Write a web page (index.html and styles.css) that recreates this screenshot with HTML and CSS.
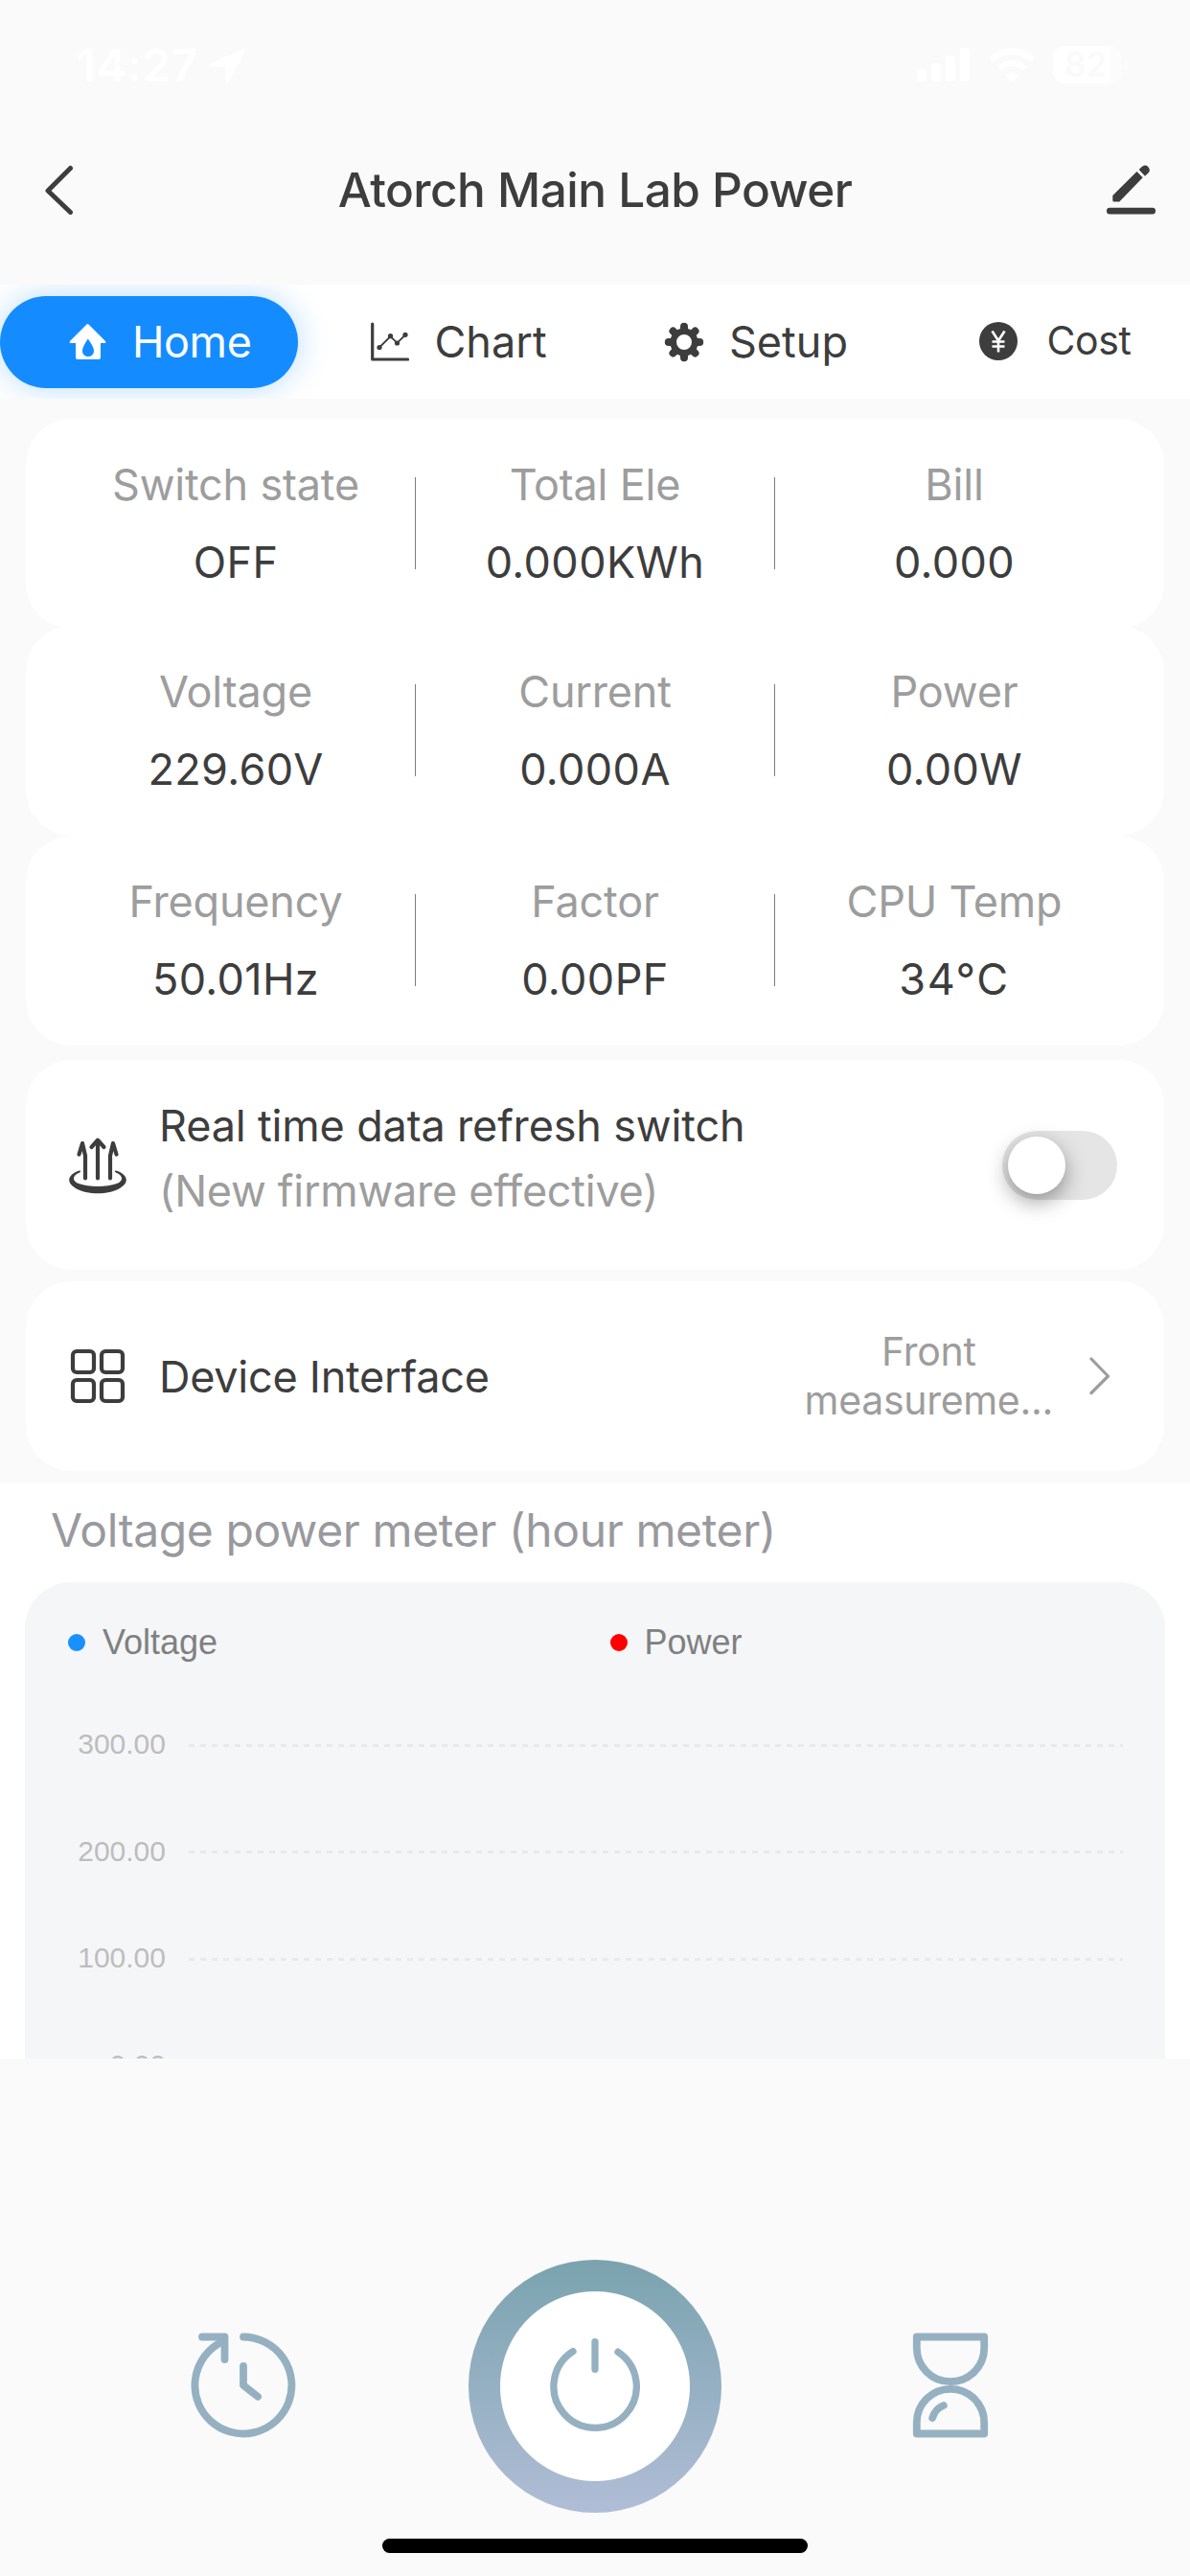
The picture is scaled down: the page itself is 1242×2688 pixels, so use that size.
FILE: index.html
```html
<!DOCTYPE html>
<html lang="en">
<head>
<meta charset="utf-8">
<title>Atorch Main Lab Power</title>
<link rel="stylesheet" href="styles.css">
</head>
<body>
<div class="screen">
  <div class="status">
    <span class="time">14:27</span>
    <svg class="location" width="40" height="38" viewBox="0 0 40 38"><path fill="currentColor" d="M36.500 1.300 2.500 16.500Q-.5 18.500 3 19.500H17Q18.500 19.500 18.500 21V34.500Q19.500 38 22 35L38.500 3.500Q39 .5 36.500 1.300Z"/></svg>
    <svg class="signal" width="56" height="36" viewBox="0 0 56 36" fill="currentColor"><rect x="0" y="22" width="10" height="13" rx="3"/><rect x="15" y="16" width="10" height="19" rx="3"/><rect x="30" y="8" width="10" height="27" rx="3"/><rect x="45" y="0" width="10" height="35" rx="3"/></svg>
    <svg class="wifi" width="48" height="36" viewBox="0 0 48 36"><g fill="none" stroke="currentColor" stroke-width="6.500"><path d="M2.500 12.500Q24-6 45.500 12.500"/><path d="M10.500 21.500Q24 10 37.500 21.500"/></g><path fill="currentColor" d="M17 28.500Q24 23 31 28.500L24 35.500Z"/></svg>
    <span class="battery"><span class="level">82</span></span>
    <span class="nub"></span>
  </div>

  <header class="header">
    <svg class="back" width="32" height="52" viewBox="0 0 32 52"><path d="M28.500 3.500 5 27 28.500 49.500" fill="none" stroke="currentColor" stroke-width="5" stroke-linecap="round" stroke-linejoin="round"/></svg>
    <h1>Atorch Main Lab Power</h1>
    <svg class="edit" width="52" height="52" viewBox="1155 172.500 52 52" fill="currentColor"><path d="M1161.300 204.500 1186.500 179.500 1192.700 185.700 1168.300 211H1163Q1161.300 211 1161.300 209.500ZM1188.700 177.500 1191.700 174.500Q1195 171.500 1198 174.300 1201.500 178 1198.500 181L1195 184.300Z"/><rect x="1155" y="217.300" width="51" height="6.700" rx="3.300"/></svg>
  </header>

  <nav class="tabs">
    <div class="tab active">
      <svg width="40" height="42" viewBox="0 0 40 42"><path fill="currentColor" fill-rule="evenodd" d="M19 2Q20 2 21 3L38 20Q39 22 37 22H33V37Q33 39 31 39H9Q7 39 7 37V22H2Q0 22 1 20L18 3Q19 2 19 2ZM19.800 17.500Q14 26 14 30C14 38 26 38 26 30Q26 26 19.800 17.500Z"/></svg>
      <span>Home</span>
    </div>
    <div class="tab chart-tab">
      <svg width="40" height="42" viewBox="0 0 40 42"><path d="M1.700 2V39H38.500" fill="none" stroke="currentColor" stroke-width="3.200" stroke-linecap="round" stroke-linejoin="round"/><path d="M9 26.500 20.500 15 27.500 21.800 36 13.500" fill="none" stroke="currentColor" stroke-width="1.800"/><g fill="currentColor"><circle cx="9" cy="26.500" r="2.600"/><circle cx="20.500" cy="14.700" r="2.600"/><circle cx="27.500" cy="22" r="2.600"/><circle cx="36" cy="13.300" r="2.600"/></g></svg>
      <span>Chart</span>
    </div>
    <div class="tab setup-tab">
      <svg width="42" height="42" viewBox="-21 -21 42 42"><g fill="none" stroke="currentColor" stroke-width="8" stroke-linecap="round"><path d="M0-16.200V-12M0 16.200V12M-16.200 0H-12M16.200 0H12"/><path d="M-11.500-11.500-9-9M11.500-11.500 9-9M-11.500 11.500-9 9M11.500 11.500 9 9"/></g><circle r="11.300" fill="none" stroke="currentColor" stroke-width="6.600"/></svg>
      <span>Setup</span>
    </div>
    <div class="tab cost-tab">
      <svg width="40" height="42" viewBox="0 0 40 42"><circle cx="20" cy="21" r="20" fill="currentColor"/><path d="M13.500 10.500 20 20.500 26.500 10.500M20 20.500V32.500M13.500 21.500H26.500M13.500 26.500H26.500" fill="none" stroke="#fff" stroke-width="2.600"/></svg>
      <span>Cost</span>
    </div>
  </nav>

  <main class="content">
    <section class="card stats">
      <div class="stat"><span class="label">Switch state</span><span class="value">OFF</span></div>
      <i class="divider"></i>
      <div class="stat"><span class="label">Total Ele</span><span class="value">0.000KWh</span></div>
      <i class="divider"></i>
      <div class="stat"><span class="label">Bill</span><span class="value">0.000</span></div>
    </section>
    <section class="card stats overlap">
      <div class="stat"><span class="label">Voltage</span><span class="value">229.60V</span></div>
      <i class="divider"></i>
      <div class="stat"><span class="label">Current</span><span class="value">0.000A</span></div>
      <i class="divider"></i>
      <div class="stat"><span class="label">Power</span><span class="value">0.00W</span></div>
    </section>
    <section class="card stats">
      <div class="stat"><span class="label">Frequency</span><span class="value">50.01Hz</span></div>
      <i class="divider"></i>
      <div class="stat"><span class="label">Factor</span><span class="value">0.00PF</span></div>
      <i class="divider"></i>
      <div class="stat"><span class="label">CPU Temp</span><span class="value temp">34°C</span></div>
    </section>

    <section class="card row refresh">
      <svg class="row-icon" width="60" height="60" viewBox="0 0 60 60" fill="none" stroke="currentColor" stroke-linecap="round" stroke-linejoin="round"><g stroke-width="4.200"><path d="M30 4V43.500M23.500 11 30 3.700 36.500 11"/><path d="M17 43.500V20L14 7 10.500 18.500"/><path d="M43 43.500V20L46 7 49.500 18.500"/></g><path fill="currentColor" stroke="none" d="M11 35.500C-1 39-4 48 7 54 19 61 41 61 53 54 64 48 61 39 49 35.500 47.500 35.300 47.500 36.800 48.500 37.300 57 41 57 46 50 49 39 53 21 53 10 49 3 46 3 41 11.500 37.300 12.500 36.500 12 35.300 11 35.500Z"/></svg>
      <div class="row-text">
        <span class="title">Real time data refresh switch</span>
        <span class="hint">(New firmware effective)</span>
      </div>
      <span class="toggle"><span class="knob"></span></span>
    </section>

    <section class="card row device">
      <svg class="row-icon" width="60" height="60" viewBox="0 0 60 60" fill="none" stroke="currentColor" stroke-width="4.200"><rect x="4" y="4" width="22" height="22" rx="4"/><rect x="34" y="4" width="22" height="22" rx="4"/><rect x="4" y="34" width="22" height="22" rx="4"/><rect x="34" y="34" width="22" height="22" rx="4"/></svg>
      <span class="title">Device Interface</span>
      <span class="choice">Front<br>measureme...</span>
      <svg class="chevron" width="22" height="42" viewBox="0 0 22 42"><path d="M2 3 19.500 21 2 38.500" fill="none" stroke="currentColor" stroke-width="3.200" stroke-linecap="round" stroke-linejoin="round"/></svg>
    </section>
  </main>

  <section class="meter">
    <h2>Voltage power meter (hour meter)</h2>
    <div class="panel">
      <div class="legend">
        <span class="key"><i class="dot blue"></i>Voltage</span>
        <span class="key"><i class="dot red"></i>Power</span>
      </div>
      <div class="axis"><span>300.00</span><i class="grid-line"></i></div>
      <div class="axis"><span>200.00</span><i class="grid-line"></i></div>
      <div class="axis"><span>100.00</span><i class="grid-line"></i></div>
      <div class="axis"><span>0.00</span><i class="grid-line"></i></div>
    </div>
  </section>

  <footer class="controls">
    <svg class="history" width="110" height="110" viewBox="198.500 2433.500 110 110" fill="none" stroke="currentColor" stroke-width="7.800" stroke-linecap="round" stroke-linejoin="round"><path d="M253.500 2438A50.500 50.500 0 1 1 230.500 2443.500"/><path d="M210.500 2438H234V2461.500"/><path d="M253.500 2468.500V2488.500L268.500 2500.300"/></svg>
    <div class="power">
      <svg width="94" height="98" viewBox="574 2439 94 98" fill="none" stroke="currentColor" stroke-width="7.300" stroke-linecap="round"><path d="M598 2453.700A43.200 43.200 0 1 0 645 2454.200"/><path d="M621 2443.600V2472.300"/></svg>
    </div>
    <svg class="hourglass" width="80" height="110" viewBox="951.500 2433.500 80 110" fill="none" stroke="currentColor" stroke-width="7.800" stroke-linecap="round" stroke-linejoin="round"><path d="M956.300 2438H1026.700V2449.500A35.200 35.200 0 0 1 956.300 2449.500Z"/><path d="M956.300 2539H1026.700V2527.500A35.200 35.200 0 0 0 956.300 2527.500Z"/><path d="M972.700 2522.500Q975.500 2513 984.300 2509.500"/></svg>
  </footer>
  <div class="home-indicator"></div>
</div>
</body>
</html>
```
FILE: styles.css
```css
* { box-sizing: border-box; }

body {
  margin: 0;
  background: #fafafa;
  color: #3d3d3d;
  font-family: Inter, "Liberation Sans", sans-serif;
  font-size: 45px;
}

svg { display: block; flex: none; }

.screen {
  width: 1242px;
  height: 2688px;
  display: flex;
  flex-direction: column;
  overflow: hidden;
}

/* Status bar */
.status {
  height: 132px;
  flex: none;
  display: flex;
  align-items: flex-start;
  padding: 48px 64px 0 80px;
  color: #fff;
}
.time {
  width: 137px;
  font-size: 47px;
  font-weight: 600;
  line-height: 40px;
  letter-spacing: .8px;
}
.location { margin-top: 2px; }
.signal { margin: 2px 19px 0 auto; }
.wifi { margin: 2px 19px 0 0; }
.battery {
  width: 72px;
  height: 39px;
  border-radius: 12px;
  background: #fcfcfc;
}
.level {
  display: block;
  width: 59px;
  height: 39px;
  padding-left: 12px;
  border-radius: 12px 0 0 12px;
  background: #fff;
  color: #fafafa;
  font-size: 35px;
  font-weight: 600;
  line-height: 39px;
}
.nub {
  width: 5px;
  height: 13px;
  margin: 13px 0 0 2px;
  border-radius: 0 5px 5px 0;
  background: #fcfcfc;
}

/* Title bar */
.header {
  height: 165px;
  flex: none;
  display: grid;
  grid-template-columns: 52px 1fr 52px;
  align-items: center;
  padding: 0 35px 33px 45px;
}
h1 {
  margin: 0 10px 0 0;
  font-size: 49.500px;
  font-weight: 500;
  letter-spacing: -.52px;
  text-align: center;
}

/* Tabs */
.tabs {
  height: 119px;
  flex: none;
  display: grid;
  grid-template-columns: repeat(4, 1fr);
  align-items: center;
  overflow: hidden;
  background: #fff;
}
.tab {
  height: 96px;
  display: flex;
  align-items: center;
  gap: 26px;
  padding-left: 72px;
  border-radius: 48px;
  line-height: 96px;
}
.tab.active {
  background: #148cff;
  color: #fff;
  letter-spacing: -.4px;
  box-shadow: 0 0 32px rgba(20, 140, 255, .3);
}
.chart-tab { padding-left: 76px; gap: 27px; }
.cost-tab {
  padding-left: 90px;
  gap: 31px;
  font-size: 41px;
  letter-spacing: -.39px;
  line-height: 92px;
  align-items: flex-start;
}
.cost-tab svg { margin-top: 26px; }

/* Cards */
.content {
  flex: none;
  padding: 21px 27px 12px;
}
.card {
  border-radius: 48px;
  background: #fff;
}
.stats {
  height: 219px;
  display: flex;
  align-items: center;
  padding: 0 32px;
}
.stats.overlap { margin-top: -3px; }
.stat {
  flex: 1 1 0;
  display: flex;
  flex-direction: column;
  align-items: center;
  gap: 21px;
  line-height: 60px;
}
.divider {
  width: 1px;
  height: 96px;
  margin-bottom: 1px;
  background: #7d7d7d;
}
.label, .hint, .choice { color: #9d9d9d; }
.label { letter-spacing: -.2px; }
.value { letter-spacing: .4px; }
.value.temp { letter-spacing: 1.6px; }

.row {
  display: flex;
  align-items: center;
  padding: 0 49px 0 45px;
}
.row-icon { margin-right: 34px; }
.refresh { height: 219px; margin-top: 15px; }
.row-text {
  display: flex;
  flex-direction: column;
  align-self: flex-start;
  padding-top: 35px;
  line-height: 68px;
}
.refresh .title { letter-spacing: -.16px; }
.refresh .hint { letter-spacing: -.27px; }
.toggle {
  width: 120px;
  height: 72px;
  margin-left: auto;
  padding: 6px;
  border-radius: 36px;
  background: #e5e5e5;
}
.knob {
  display: block;
  width: 60px;
  height: 60px;
  border-radius: 50%;
  background: #fff;
  box-shadow: 0 8px 22px rgba(0, 0, 0, .38);
}
.device { height: 198px; margin-top: 12px; padding-right: 56px; }
.device .title { letter-spacing: -.25px; }
.choice {
  margin-left: auto;
  font-size: 41px;
  line-height: 51px;
  letter-spacing: -.3px;
  text-align: center;
}
.chevron { margin-left: 38px; color: #9d9d9d; }

/* Hourly meter */
.meter {
  height: 601px;
  flex: none;
  overflow: hidden;
  padding: 0 26px;
  background: #fff;
}
h2 {
  margin: 0;
  padding: 0 27px 5px;
  color: #99999e;
  font-size: 48px;
  font-weight: 400;
  line-height: 99px;
  letter-spacing: -.38px;
}
.panel {
  height: 700px;
  padding: 33px 44px 0 45px;
  border-radius: 48px;
  background: #f5f6f8;
  font-family: "Liberation Sans", Arial, sans-serif;
}
.legend {
  height: 60px;
  display: grid;
  grid-template-columns: 565.500px 1fr;
  align-items: center;
  margin-bottom: 21.500px;
  color: #808080;
  font-size: 36px;
}
.key { display: flex; align-items: center; gap: 18px; }
.dot { width: 18px; height: 18px; border-radius: 50%; }
.blue { background: #1890ff; }
.red { background: #f00; }
.axis {
  height: 111.500px;
  display: flex;
  align-items: center;
  gap: 24px;
  color: #bdbdbf;
  font-size: 30px;
}
.axis span { width: 102px; padding-bottom: 2px; text-align: right; }
.grid-line {
  flex: 1;
  height: 3px;
  background: repeating-linear-gradient(90deg, #e8e9eb 0 6px, transparent 6px 12px);
}

/* Bottom controls */
.controls {
  height: 501px;
  flex: none;
  display: grid;
  grid-template-columns: 290.500px 1fr 80px;
  align-items: end;
  padding: 0 210.500px 27px 198.500px;
  color: #95b0c1;
}
.history, .hourglass { margin-bottom: 78.500px; }
.power {
  width: 264px;
  height: 264px;
  display: flex;
  align-items: center;
  justify-content: center;
  border-radius: 50%;
  background: radial-gradient(circle, #fff 98.500px, transparent 99.500px), linear-gradient(#7aa3af, #b0bdd6);
}
.power svg { margin-bottom: 4px; }
.home-indicator {
  width: 444px;
  height: 15px;
  flex: none;
  align-self: center;
  border-radius: 8px;
  background: #000;
}
```
